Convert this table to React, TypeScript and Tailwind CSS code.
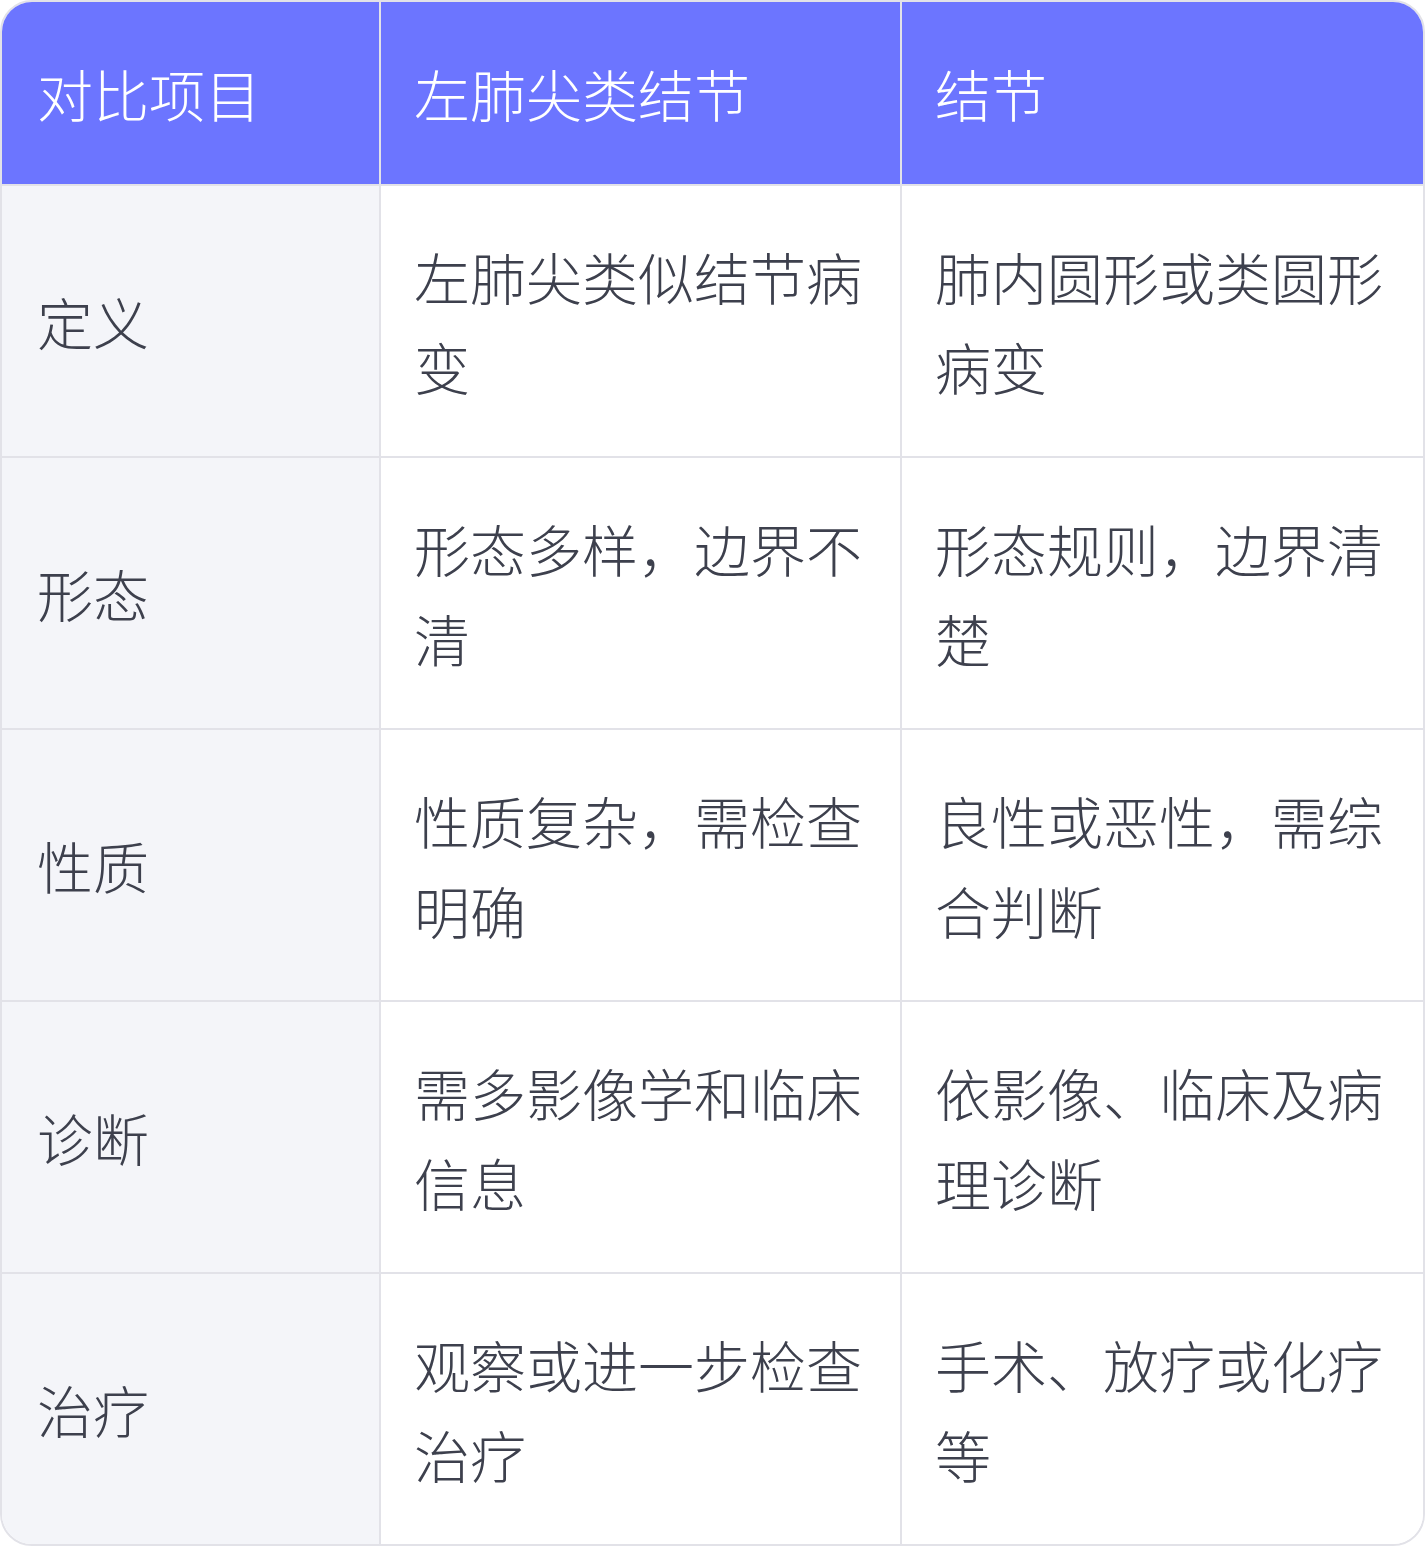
const header = ["对比项目", "左肺尖类结节", "结节"];

const rows = [
  ["定义", "左肺尖类似结节病变", "肺内圆形或类圆形病变"],
  ["形态", "形态多样，边界不清", "形态规则，边界清楚"],
  ["性质", "性质复杂，需检查明确", "良性或恶性，需综合判断"],
  ["诊断", "需多影像学和临床信息", "依影像、临床及病理诊断"],
  ["治疗", "观察或进一步检查治疗", "手术、放疗或化疗等"],
];

export default function App() {
  return (
    <div className="w-[1425px] bg-white" style={{ fontFamily: '"Noto Sans CJK SC", "Noto Sans", sans-serif' }}>
      <div className="border-2 border-[#e2e2e8] rounded-[32px] overflow-hidden font-light">
        {/* header */}
        <div className="grid grid-cols-[379px_521px_521px] bg-[#6c75ff] border-b-2 border-[#e2e2e8]">
          {header.map((h, i) => (
            <div
              key={h}
              className={`h-[182px] flex items-center text-[56px] leading-[90px] text-white ${
                i === 0 ? "px-[35px]" : "px-[33px]"
              } ${i < 2 ? "border-r-2 border-[#e2e2e8]" : ""}`}
            >
              {h}
            </div>
          ))}
        </div>

        {/* body */}
        {rows.map((r, ri) => (
          <div
            key={r[0]}
            className={`grid grid-cols-[379px_521px_521px] ${
              ri < rows.length - 1 ? "border-b-2 border-[#e2e2e8]" : ""
            }`}
          >
            {r.map((c, ci) => (
              <div
                key={ci}
                className={`h-[270px] flex items-center text-[56px] leading-[90px] text-[#3d404d] ${
                  ci === 0 ? "bg-[#f4f5f9] px-[35px]" : "bg-white px-[33px]"
                } ${ci < 2 ? "border-r-2 border-[#e2e2e8]" : ""}`}
              >
                <span>{c}</span>
              </div>
            ))}
          </div>
        ))}
      </div>
    </div>
  );
}
